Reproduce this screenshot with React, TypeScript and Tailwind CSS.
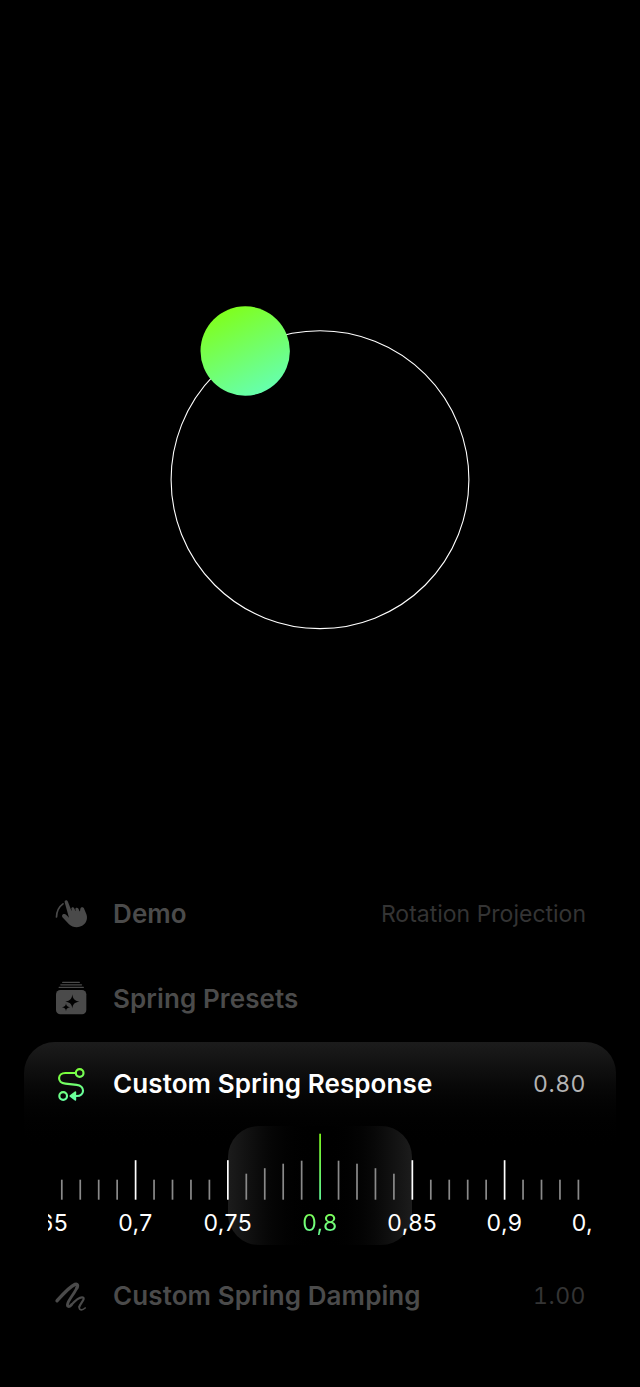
import type { ReactNode } from "react";

const font = "font-['Inter',sans-serif]";

function DemoIcon() {
  return (
    <svg viewBox="39 31.5 108 108" className="size-9 shrink-0" fill="none">
      <path d="M49.5 94.5C50 77 57 63.5 69 55" stroke="#4a4a4a" strokeWidth="5" strokeLinecap="round" />
      <path
        d="M74 50C73 43.500 81 42 83.500 48L94 75L95.500 75L94 70C94 64.500 101 64 103 69L106 76L107.500 76L106 71C106.500 65.500 113 65 115.500 70L118.500 77L120 77L121 70C123 64 131 64 133 71L139.500 87C144 101 138 114 126.500 121C112 128.500 97 125 87 116L68 96C63.500 90 68 84 74 85.500C79 87 82.500 92 87 96.500Z"
        fill="#4a4a4a"
      />
    </svg>
  );
}

function PresetsIcon() {
  return (
    <svg viewBox="39 31.5 108 108" className="size-9 shrink-0" fill="none">
      <path d="M68 35.500H118M62.500 43H124.500M57.500 50.500H130" stroke="#4a4a4a" strokeWidth="4" strokeLinecap="round" />
      <rect x="48" y="58.500" width="91" height="73" rx="13" fill="#4a4a4a" />
      <path
        d="M97 71C98.500 85 103 90 118 93C103 96 98.500 101 97 114C95.500 101 91 96 76 93C91 90 95.500 85 97 71Z"
        fill="#000"
      />
      <path
        d="M78 98C79 106 81.500 108.500 90 110C81.500 111.500 79 114 78 122C77 114 74.500 111.500 66 110C74.500 108.500 77 106 78 98Z"
        fill="#000"
      />
    </svg>
  );
}

function ResponseIcon() {
  return (
    <svg viewBox="39 34.5 108 108" className="size-9 shrink-0" fill="none">
      <defs>
        <linearGradient id="route" gradientUnits="userSpaceOnUse" x1="80" y1="38" x2="108" y2="134">
          <stop stopColor="#7dff2d" />
          <stop offset="1" stopColor="#66ffac" />
        </linearGradient>
      </defs>
      <g stroke="url(#route)" strokeWidth="6.4" strokeLinecap="round">
        <circle cx="119" cy="52.500" r="11.500" />
        <circle cx="69.500" cy="121.500" r="11.500" />
        <path d="M107 52.500H76C52 52.500 50 82 76 84.500L110 88C136 91 135 121.500 110 121.500H105" />
      </g>
      <path d="M89.500 119L104.500 108Q108.500 106 108.500 110V133Q108.500 137 104.500 135L89.500 124Q86.500 121.500 89.500 119Z" fill="url(#route)" />
    </svg>
  );
}

function DampingIcon() {
  return (
    <svg viewBox="39 28.5 108 108" className="size-9 shrink-0" fill="none" stroke="#4a4a4a" strokeLinecap="round" strokeLinejoin="round">
      <path d="M51 97C67 79 89 54 105 47.500C112 45 115 50 111 58" strokeWidth="10" />
      <path d="M111 57C106 71 88 91 83.500 104C80 114 86 118 94 109" strokeWidth="8.500" />
      <path d="M93 110C104 98 120 84 129 87C137 91 121 104 118 115" strokeWidth="6.500" />
      <path d="M118 114C116 125 125 128 135.500 118.500" strokeWidth="5" />
    </svg>
  );
}

type RowProps = { icon: ReactNode; title: string; value?: string; active?: boolean };

function Row({ icon, title, value, active = false }: RowProps) {
  const numeric = value !== undefined && /^[\d.]+$/.test(value);
  return (
    <div className="flex h-[85px] shrink-0 items-center gap-6 pr-[30px] pl-[29px]">
      {icon}
      <span
        className={`flex-1 whitespace-nowrap text-[26px] font-semibold tracking-[0.1px] ${active ? "pb-0.5 text-white" : "pb-px text-[#4b4b4b]"}`}
      >
        {title}
      </span>
      {value && (
        <span
          className={`whitespace-nowrap text-[23px] ${numeric ? "tracking-[0.5px] tabular-nums" : ""} ${active ? "text-[#b4b4b4]" : "pt-px text-[#343434]"}`}
        >
          {value}
        </span>
      )}
    </div>
  );
}

const nearHeights = [66, 39, 36, 31.5, 26];
const step = 18.45;
const ticks = Array.from({ length: 29 }, (_, i) => i - 14);
const labels = ["0,65", "0,7", "0,75", "0,8", "0,85", "0,9", "0,95"];

function TickMarks() {
  return (
    <svg viewBox="48 0 544 74" className="h-[74px] w-[544px] shrink-0">
      <defs>
        <linearGradient id="needle" gradientUnits="userSpaceOnUse" x1="0" y1="7.5" x2="0" y2="73.500">
          <stop stopColor="#80ff1c" />
          <stop offset="1" stopColor="#66ff9c" />
        </linearGradient>
      </defs>
      {ticks.map((k) => {
        const near = Math.abs(k);
        const major = near % 5 === 0;
        const height = near < 5 ? nearHeights[near] : major ? 39.5 : 20;
        const fill = k === 0 ? "url(#needle)" : major ? "#fff" : "#8a8a8a";
        return <rect key={k} x={320.1 + k * step - 0.85} y={73.7 - height} width="1.7" height={height} fill={fill} />;
      })}
    </svg>
  );
}

function Ruler() {
  return (
    <div className="relative flex h-[119px] shrink-0 justify-center">
      <div className="absolute inset-y-0 w-[184px] rounded-[31px] bg-linear-to-r from-[#1c1c1c] via-black to-[#1c1c1c]" />
      <div className="relative mx-6 flex flex-1 flex-col items-center overflow-hidden">
        <TickMarks />
        <div className="mt-[7.5px] flex justify-center">
          {labels.map((label, i) => {
            const tone = i === 3 ? "bg-linear-to-b from-[#80ff3c] to-[#66ff9c] bg-clip-text text-transparent" : "text-white";
            return (
              <div key={label} className="flex w-[92.25px] shrink-0 justify-center">
                <span className={`whitespace-nowrap text-[23px] leading-[30px] tracking-[0.4px] ${tone}`}>{label}</span>
              </div>
            );
          })}
        </div>
      </div>
    </div>
  );
}

export default function App() {
  return (
    <main className={`flex h-[1387px] w-[640px] flex-col bg-black ${font}`}>
      <div className="flex h-[871px] shrink-0 justify-center pt-[300px]">
        <svg viewBox="160 300 320 340" className="h-[340px] w-[320px]" fill="none">
          <defs>
            <linearGradient id="ball" x1="0.25" y1="0.03" x2="0.7" y2="0.95">
              <stop stopColor="#80ff1a" />
              <stop offset="1" stopColor="#66ffac" />
            </linearGradient>
          </defs>
          <circle cx="320" cy="479.700" r="148.900" stroke="#fff" strokeWidth="1.100" />
          <circle cx="245.200" cy="351" r="44.700" fill="url(#ball)" />
        </svg>
      </div>
      <section className="flex flex-col px-6">
        <Row icon={<DemoIcon />} title="Demo" value="Rotation Projection" />
        <Row icon={<PresetsIcon />} title="Spring Presets" />
        <div className="mt-px flex h-[203px] flex-col rounded-t-[31px] bg-linear-to-b from-[#1c1c1c] to-black to-[110px]">
          <Row icon={<ResponseIcon />} title="Custom Spring Response" value="0.80" active />
          <div className="-mt-px">
            <Ruler />
          </div>
        </div>
        <div className="mt-2">
          <Row icon={<DampingIcon />} title="Custom Spring Damping" value="1.00" />
        </div>
      </section>
    </main>
  );
}
